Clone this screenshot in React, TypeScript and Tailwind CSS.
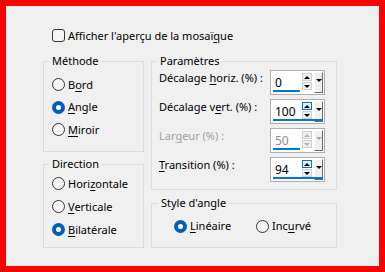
import React from "react";

const font = { fontFamily: '"Noto Sans", "Liberation Sans", sans-serif' };

const U = ({ children }: { children: React.ReactNode }) => <span className="underline underline-offset-2">{children}</span>;

const Radio = ({ checked, label }: { checked?: boolean; label: React.ReactNode }) => (
  <div className="flex items-center gap-[3px]">
    {checked ? (
      <span className="w-[13px] h-[13px] rounded-full bg-[#005fb8] flex items-center justify-center">
        <span className="w-[5px] h-[5px] rounded-full bg-white" />
      </span>
    ) : (
      <span className="w-[13px] h-[13px] rounded-full border border-[#333333] bg-[#f5f5f5]" />
    )}
    <span className="leading-[16px]">{label}</span>
  </div>
);

const Spin = ({ value, full, focus, disabled }: { value: string; full?: boolean; focus?: boolean; disabled?: boolean }) => (
  <div className="relative w-[55px] h-[25px] border border-[#adadad] bg-white flex items-center">
    <span className={`flex-1 pl-[4px] text-[12px] leading-[16px] mt-[1px] ${disabled ? "text-[#8a8a8a]" : "text-[#000000]"}`}>{value}</span>
    {/* spinner */}
    <div className="flex flex-col gap-[1px] mr-[2px] mt-[-2px]">
      <span className={`w-[10px] h-[8px] flex items-center justify-center border ${focus ? "border-[#0078d7] bg-[#e5f1fb]" : "border-[#cfcfcf] bg-[#f0f0f0]"}`}>
        <span className={`w-0 h-0 border-l-[3px] border-r-[3px] border-b-[3px] border-l-transparent border-r-transparent ${disabled ? "border-b-[#b5b5b5]" : "border-b-[#000000]"}`} />
      </span>
      <span className="w-[10px] h-[8px] flex items-center justify-center border border-[#cfcfcf] bg-[#f0f0f0]">
        <span className={`w-0 h-0 border-l-[3px] border-r-[3px] border-t-[3px] border-l-transparent border-r-transparent ${disabled ? "border-t-[#b5b5b5]" : "border-t-[#000000]"}`} />
      </span>
    </div>
    {/* dropdown */}
    <div className="self-stretch my-[1px] mr-[1px] w-[9px] flex items-start justify-center pt-[6px] bg-[#f0f0f0] border-l border-t border-l-white border-t-white border-r border-b border-r-[#696969] border-b-[#696969]">
      <span className={`w-0 h-0 border-l-[3px] border-r-[3px] border-t-[3px] border-l-transparent border-r-transparent ${disabled ? "border-t-[#a0a0a0]" : "border-t-[#000000]"}`} />
    </div>
    <span className={`absolute left-[2px] bottom-[2px] h-[2px] bg-[#0078d7] ${full ? "right-[1px]" : "w-[27px]"}`} />
  </div>
);

const ParamRow = ({ label, children, disabled }: { label: React.ReactNode; children: React.ReactNode; disabled?: boolean }) => (
  <div className="flex items-start">
    <span className={`w-[111px] leading-[16px] whitespace-nowrap ${disabled ? "text-[#a0a0a0]" : ""}`}>{label}</span>
    {children}
  </div>
);

export default function App() {
  return (
    <div style={font} className="w-[385px] h-[272px] border-[6px] border-[#ff0000] bg-[#f0f0f0] text-[11px] text-[#000000]">
      {/* checkbox */}
      <div className="flex items-center gap-[3px] pl-[46px] pt-[21px] h-[38px]">
        <span className="w-[13px] h-[13px] rounded-[3px] border border-[#333333] bg-[#f5f5f5]" />
        <span className="leading-[16px]">
          Afficher l'aperçu de la mosaï<U>q</U>ue
        </span>
      </div>

      <div className="flex gap-[7px] pl-[37px] pt-[9px]">
        {/* left column */}
        <div className="w-[101px] flex flex-col gap-[4px]">
          <fieldset className="h-[99px] border border-[#dcdcdc] px-[5px]">
            <legend className="px-[3px] leading-[16px]">Méthode</legend>
            <div className="pl-[3px] pt-[4px] flex flex-col">
              <div className="h-[23px] flex items-center"><Radio label={<>B<U>o</U>rd</>} /></div>
              <div className="h-[22px] flex items-center"><Radio checked label={<><U>A</U>ngle</>} /></div>
              <div className="h-[23px] flex items-center"><Radio label={<><U>M</U>iroir</>} /></div>
            </div>
          </fieldset>
          <fieldset className="h-[92px] border border-[#dcdcdc] px-[5px]">
            <legend className="px-[3px] leading-[16px]">Direction</legend>
            <div className="pl-[3px] flex flex-col">
              <div className="h-[23px] flex items-center"><Radio label={<>Hori<U>z</U>ontale</>} /></div>
              <div className="h-[23px] flex items-center"><Radio label={<><U>V</U>erticale</>} /></div>
              <div className="h-[23px] flex items-center"><Radio checked label={<><U>B</U>ilatérale</>} /></div>
            </div>
          </fieldset>
        </div>

        {/* right column */}
        <div className="w-[186px] flex flex-col gap-[5px]">
          <fieldset className="h-[137px] border border-[#dcdcdc] px-[5px]">
            <legend className="px-[3px] leading-[16px]">Paramètres</legend>
            <div className="pl-[2px] pt-[1px] flex flex-col gap-[4px]">
              <ParamRow label={<>Décalage <U>h</U>oriz. (%) :</>}>
                <Spin value="0" />
              </ParamRow>
              <ParamRow label={<>Décalage v<U>e</U>rt. (%) :</>}>
                <Spin value="100" full focus />
              </ParamRow>
              <ParamRow disabled label={<>Lar<U>g</U>eur (%) :</>}>
                <Spin value="50" disabled />
              </ParamRow>
              <ParamRow label={<><U>T</U>ransition (%) :</>}>
                <Spin value="94" full focus />
              </ParamRow>
            </div>
          </fieldset>
          <fieldset className="h-[53px] border border-[#dcdcdc] px-[6px]">
            <legend className="px-[3px] leading-[16px]">Style d'angle</legend>
            <div className="pl-[16px] pt-[7px] flex items-center">
              <div className="w-[82px]"><Radio checked label={<><U>L</U>inéaire</>} /></div>
              <Radio label={<>Inc<U>u</U>rvé</>} />
            </div>
          </fieldset>
        </div>
      </div>
    </div>
  );
}
